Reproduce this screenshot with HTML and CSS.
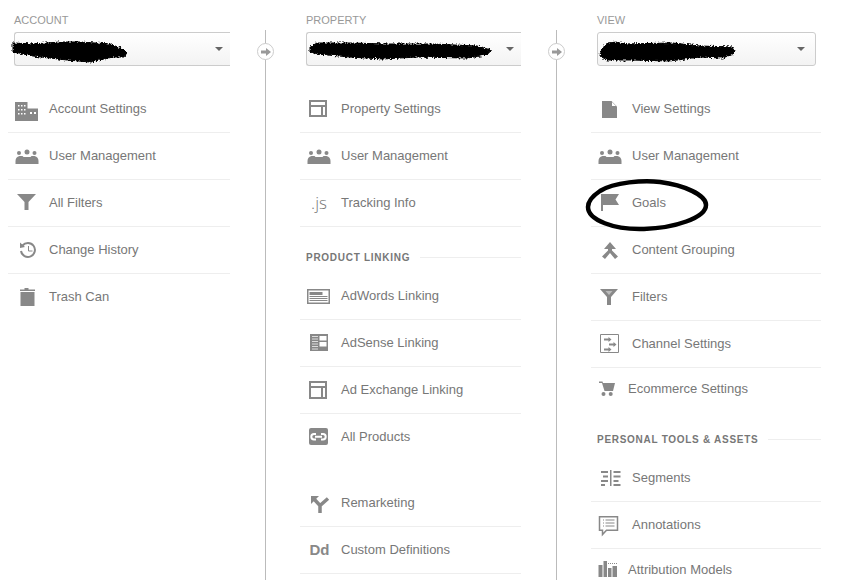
FILE: index.html
```html
<!DOCTYPE html>
<html lang="en">
<head>
<meta charset="utf-8">
<title>Admin</title>
<link rel="stylesheet" href="styles.css">
</head>
<body>
<svg class="defs" width="0" height="0"><filter id="rough" x="-5%" y="-30%" width="110%" height="160%"><feTurbulence type="fractalNoise" baseFrequency="0.55" numOctaves="2" seed="4"/><feDisplacementMap in="SourceGraphic" scale="5" xChannelSelector="R" yChannelSelector="G"/></filter></svg>
<main class="admin">
  <section class="col col-account">
    <div class="col-label">ACCOUNT</div>
    <div class="picker picker-open">
      <svg class="scribble" width="118" height="26" viewBox="0 0 118 26"><path d="M0 4L20 5 47 3 67 3 97 5 110 10 114 14 112 18 100 18 77 23 54 21 20 17 0 13z"/></svg>
      <span class="caret"></span>
    </div>
    <ul class="rows">
      <li class="row"><svg class="ico" width="26" height="26" viewBox="0 0 26 26"><path class="g" d="M1 6h12.500v6.500H24V25H1z"/><path class="w" d="M4 9h1.500v1.500H4zM7 9h1.500v1.500H7zM10 9h1.500v1.500H10zM4 13h1.500v1.500H4zM7 13h1.500v1.500H7zM10 13h1.500v1.500H10zM4 17h1.500v1.500H4zM7 17h1.500v1.500H7zM10 17h1.500v1.500H10zM16 16h2v2h-2zM20 16h2v2h-2z"/></svg><span class="txt">Account Settings</span></li>
      <li class="row"><svg class="ico" width="26" height="26" viewBox="0 0 26 26"><circle class="g" cx="5" cy="10" r="2"/><circle class="g" cx="13" cy="9" r="2.500"/><circle class="g" cx="20.500" cy="10" r="2"/><path class="g" d="M1.500 21v-3q0-4 4-5h3l1 1h7l1-1h3q4 1 4 5v3z"/></svg><span class="txt">User Management</span></li>
      <li class="row"><svg class="ico" width="26" height="26" viewBox="0 0 26 26"><path class="g" d="M3 4h19l-7.500 8v8h-4v-8z"/></svg><span class="txt">All Filters</span></li>
      <li class="row"><svg class="ico" width="26" height="26" viewBox="0 0 26 26"><path class="ln" d="M8.500 8.500a7 7 0 1 1-1.500 5.500"/><path class="g" d="M6 5.500l5 4.500-5 1z"/><path class="ln thin" d="M14.500 9v5h4"/></svg><span class="txt">Change History</span></li>
      <li class="row row-plain"><svg class="ico" width="26" height="26" viewBox="0 0 26 26"><path class="g" d="M6 7v-1.500h4.500V4h4v1.500H21V7zM6.500 8h14v14h-14z"/></svg><span class="txt">Trash Can</span></li>
    </ul>
  </section>

  <div class="link"><span class="node"><svg width="10" height="8" viewBox="0 0 10 8"><path d="M0 2.500h5V0l5 4-5 4V5.500H0z"/></svg></span></div>

  <section class="col col-property">
    <div class="col-label">PROPERTY</div>
    <div class="picker picker-open">
      <svg class="scribble" width="184" height="26" viewBox="0 0 184 26"><path d="M0 8L7 4 40 4 77 5 123 5 167 7 181 11 177 16 157 19 107 18 73 20 40 18 7 15 0 13z"/></svg>
      <span class="caret"></span>
    </div>
    <ul class="rows">
      <li class="row"><svg class="ico" width="26" height="26" viewBox="0 0 26 26"><path class="ln" d="M4 5h16v15H4zM4 10h16M16 10v10"/></svg><span class="txt">Property Settings</span></li>
      <li class="row"><svg class="ico" width="26" height="26" viewBox="0 0 26 26"><circle class="g" cx="5" cy="10" r="2"/><circle class="g" cx="13" cy="9" r="2.500"/><circle class="g" cx="20.500" cy="10" r="2"/><path class="g" d="M1.500 21v-3q0-4 4-5h3l1 1h7l1-1h3q4 1 4 5v3z"/></svg><span class="txt">User Management</span></li>
      <li class="row"><span class="ico glyph-js">.js</span><span class="txt">Tracking Info</span></li>
    </ul>
    <h2 class="heading"><span>PRODUCT LINKING</span></h2>
    <ul class="rows">
      <li class="row"><svg class="ico" width="26" height="26" viewBox="0 0 26 26"><path class="ln mid" d="M1.750 6.750h21.500v13.500H1.750z"/><path class="g" d="M3.500 9h13v3h-13z"/><path class="ln hair" d="M3.500 13.500h18M3.500 15.500h18M3.500 17.500h18"/></svg><span class="txt">AdWords Linking</span></li>
      <li class="row"><svg class="ico" width="26" height="26" viewBox="0 0 26 26"><path class="g" d="M4 4h18v17H4z"/><path class="ln hair pale" d="M6 6.500h6M6 9h6M6 11.500h6M6 14h6M6 16.500h6M6 19h6"/><path class="w" d="M13.500 6h7v4.500h-7zM13.500 12h7v4.500h-7z"/></svg><span class="txt">AdSense Linking</span></li>
      <li class="row"><svg class="ico" width="26" height="26" viewBox="0 0 26 26"><path class="ln" d="M4 5h16v16H4zM4 10h16M16 10v11"/></svg><span class="txt">Ad Exchange Linking</span></li>
      <li class="row row-plain"><svg class="ico" width="26" height="26" viewBox="0 0 26 26"><rect class="g" x="3" y="4" width="19" height="17" rx="2"/><path class="ln wln" d="M10 10H8a2.700 2.700 0 0 0 0 5.400h2M15 10h2a2.700 2.700 0 0 1 0 5.400h-2M9 12.700h7"/></svg><span class="txt">All Products</span></li>
    </ul>
    <ul class="rows rows-gap">
      <li class="row"><svg class="ico" width="26" height="26" viewBox="0 0 26 26"><path class="g" d="M5 6h8l-8 8z"/><path class="ln thick" d="M8 9l6 6.500 8-7M14 15v8"/></svg><span class="txt">Remarketing</span></li>
      <li class="row"><span class="ico glyph-dd">Dd</span><span class="txt">Custom Definitions</span></li>
    </ul>
  </section>

  <div class="link"><span class="node"><svg width="10" height="8" viewBox="0 0 10 8"><path d="M0 2.500h5V0l5 4-5 4V5.500H0z"/></svg></span></div>

  <section class="col col-view">
    <div class="col-label">VIEW</div>
    <div class="picker picker-full">
      <svg class="scribble" width="138" height="26" viewBox="0 0 138 26"><path d="M1 12L7 4 17 3 23 5 73 4 100 7 133 8 135 14 123 19 100 18 70 22 30 21 7 21 0 17z"/></svg>
      <span class="caret"></span>
    </div>
    <ul class="rows">
      <li class="row"><svg class="ico" width="26" height="26" viewBox="0 0 26 26"><path class="g" d="M5 5h9.500l5.500 5.500V22H5z"/><path class="w" d="M15 6l4 4h-4z"/></svg><span class="txt">View Settings</span></li>
      <li class="row"><svg class="ico" width="26" height="26" viewBox="0 0 26 26"><circle class="g" cx="5" cy="10" r="2"/><circle class="g" cx="13" cy="9" r="2.500"/><circle class="g" cx="20.500" cy="10" r="2"/><path class="g" d="M1.500 21v-3q0-4 4-5h3l1 1h7l1-1h3q4 1 4 5v3z"/></svg><span class="txt">User Management</span></li>
      <li class="row"><svg class="ico" width="26" height="26" viewBox="0 0 26 26"><path class="g" d="M4 4h18l-3.500 5.500 3.500 5.500H6v6H4z"/></svg><span class="txt">Goals</span></li>
      <li class="row"><svg class="ico" width="26" height="26" viewBox="0 0 26 26"><path class="g" d="M13 5l6 7h-4v1.500l6 6-3 2.500-5-6-5 6-3-2.500 6-6V12H7z"/></svg><span class="txt">Content Grouping</span></li>
      <li class="row"><svg class="ico" width="26" height="26" viewBox="0 0 26 26"><path class="g" d="M3 5h18l-7 8v8h-4v-8z"/><path class="pale-fill" d="M8.500 7h7l-3.500 4z"/></svg><span class="txt">Filters</span></li>
      <li class="row"><svg class="ico" width="26" height="26" viewBox="0 0 26 26"><path class="ln thin" d="M3.500 3.500h18v18h-18z"/><path class="g" d="M7 7.500h4.500V6l3 2.500-3 2.500V9.500H7zM12 12.500h4.500V11l3 2.500-3 2.500v-1.500H12zM7 17.500h4.500V16l3 2.500-3 2.500v-1.500H7z"/></svg><span class="txt">Channel Settings</span></li>
      <li class="row row-compact"><svg class="ico" width="26" height="26" viewBox="0 0 26 26"><path class="g" d="M2 6.500h3.500l.500 1.500h12l-2 8H7.500L5 8H2z"/><circle class="g" cx="6.500" cy="19" r="2"/><circle class="g" cx="13.700" cy="19" r="2"/></svg><span class="txt">Ecommerce Settings</span></li>
    </ul>
    <h2 class="heading heading-wide"><span>PERSONAL TOOLS &amp; ASSETS</span></h2>
    <ul class="rows">
      <li class="row"><svg class="ico" width="26" height="26" viewBox="0 0 26 26"><path class="g" d="M13 5h1.500v16H13zM4 6h7v2H4zM6 10.500h5v2H6zM4 15h7v2H4zM4 19h4v2H4zM16.500 6h7v2h-7zM16.500 10.500h7v2h-7zM16.500 15h5v2h-5zM16.500 19h7v2h-7z"/></svg><span class="txt">Segments</span></li>
      <li class="row"><svg class="ico" width="26" height="26" viewBox="0 0 26 26"><path class="ln mid" d="M2.500 4.750h18v13.500H9.500L5.500 22.500v-4.250h-3z"/><path class="ln hair" d="M6 8h1M8.500 8h9M6 11h1M8.500 11h9M6 14h1M8.500 14h9"/></svg><span class="txt">Annotations</span></li>
      <li class="row row-compact"><svg class="ico" width="26" height="26" viewBox="0 0 26 26"><path class="g" d="M1.500 9h4v12h-4zM6.500 5h3.500v16H6.500zM11 12h3.500v9H11zM15.500 10H20v11h-4.500z"/><path class="ln hair dots" d="M11 7.500h9"/></svg><span class="txt">Attribution Models</span></li>
    </ul>
  </section>

  <svg class="circle-mark" width="126" height="56" viewBox="0 0 126 56"><path d="M16 13C30 4 60 2 76 4c24 3 46 13 46 23 0 13-32 23-62 24C30 52 4 42 4 29c0-7 6-12 12-16z"/></svg>
</main>
</body>
</html>
```

FILE: styles.css
```css
* { box-sizing: border-box; }
html, body { margin: 0; padding: 0; background: #fff; }
body { font-family: "Liberation Sans", Arial, sans-serif; color: #777; }

.defs { position: absolute; }

.admin {
  position: relative;
  display: flex;
  width: 865px;
  height: 580px;
  overflow: hidden;
}

.col { flex: none; }
.col-account { width: 222px; margin-left: 8px; }
.col-property { width: 221px; }
.col-view { width: 230px; }

.col-label {
  height: 32px;
  padding: 14px 0 0 6px;
  font-size: 11px;
  line-height: 13px;
  color: #999;
}

.picker {
  position: relative;
  display: flex;
  align-items: center;
  height: 34px;
  margin: 0 0 20px 6px;
  background: linear-gradient(#fff, #f3f3f3);
  border: 1px solid #ccc;
  border-radius: 3px;
}
.picker-open { border-right: 0; border-radius: 3px 0 0 3px; }
.picker-full { width: 219px; }

.scribble { flex: none; margin: 6px 0 0 -2px; overflow: visible; }
.scribble path { fill: #000; stroke: #000; stroke-width: 1; filter: url(#rough); }
.col-property .scribble { margin-left: 3px; }
.col-view .scribble { margin-left: 2px; }

.caret {
  position: absolute;
  top: 14px;
  right: 7px;
  width: 0;
  height: 0;
  border-left: 4px solid transparent;
  border-right: 4px solid transparent;
  border-top: 4px solid #666;
}
.picker-full .caret { right: 10px; }

.rows { list-style: none; margin: 0; padding: 0; }
.rows-gap { margin-top: 19px; }

.row {
  display: flex;
  align-items: center;
  height: 47px;
  border-bottom: 1px solid #eee;
  font-size: 13px;
}
.row-plain { border-bottom-color: transparent; }
.row-compact { height: 40px; border-bottom: 0; }
.row-compact .ico { margin-right: 5px; }

.ico { flex: none; display: block; width: 26px; margin: 0 9px 0 6px; }
.txt { line-height: 16px; padding-bottom: 1px; }
.row-compact .txt { padding: 1px 0 0; }

.g { fill: #888; }
.w { fill: #fff; }
.pale-fill { fill: #bbb; }
.ln { fill: none; stroke: #888; stroke-width: 2; }
.ln.thin, .ln.hair { stroke-width: 1; }
.ln.mid { stroke-width: 1.500; }
.ln.thick { stroke-width: 3.500; }
.ln.wln { stroke: #fff; }
.ln.pale { stroke: #ddd; }
.ln.dots { stroke-dasharray: 1 1; }

.glyph-js {
  font: 300 17px/26px "Open Sans", sans-serif;
  text-align: center;
  color: #777;
}
.glyph-dd {
  font: 700 15px/26px "Liberation Sans", sans-serif;
  text-align: center;
  color: #888;
  padding-left: 1px;
}

.heading {
  display: flex;
  align-items: center;
  gap: 10px;
  height: 46px;
  margin: 0;
  padding: 14px 0 0 6px;
  font-size: 10px;
  font-weight: 700;
  letter-spacing: 0.72px;
  color: #777;
}
.heading span { flex: none; }
.heading::after { content: ""; flex: 1; height: 1px; background: #eee; }
.heading-wide { height: 47px; padding-top: 15px; }

.link {
  position: relative;
  display: flex;
  flex: none;
  justify-content: center;
  width: 70px;
  padding-top: 30px;
}
.link::before { content: ""; width: 1px; background: #bbb; }
.node {
  position: absolute;
  top: 43px;
  left: 27px;
  display: flex;
  align-items: center;
  justify-content: center;
  width: 17px;
  height: 17px;
  border: 1.500px solid #ccc;
  border-radius: 50%;
  background: #fff;
}
.node path { fill: #999; }

.circle-mark { position: absolute; left: 584px; top: 178px; }
.circle-mark path { fill: none; stroke: #000; stroke-width: 4.500; }
```
